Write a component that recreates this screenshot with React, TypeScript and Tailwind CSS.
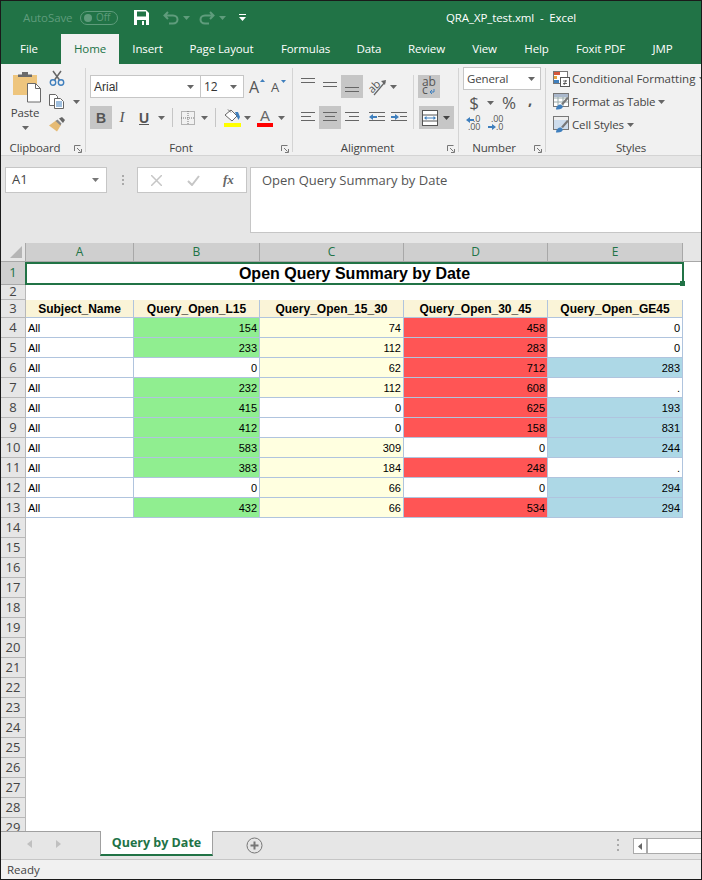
import React from 'react';

const TABS = [
  { name: 'File', w: 56 },
  { name: 'Home', w: 58, active: true },
  { name: 'Insert', w: 57 },
  { name: 'Page Layout', w: 91 },
  { name: 'Formulas', w: 77 },
  { name: 'Data', w: 50 },
  { name: 'Review', w: 65 },
  { name: 'View', w: 51 },
  { name: 'Help', w: 53 },
  { name: 'Foxit PDF', w: 75 },
  { name: 'JMP', w: 49 },
];

const FILL: Record<string, string> = {
  g: 'bg-[#90ee90]',
  y: 'bg-[#ffffe0]',
  r: 'bg-[#ff5555]',
  b: 'bg-[#add8e6]',
  w: 'bg-white',
};

const DATA: [string, string][][] = [
  [['154', 'g'], ['74', 'y'], ['458', 'r'], ['0', 'w']],
  [['233', 'g'], ['112', 'y'], ['283', 'r'], ['0', 'w']],
  [['0', 'w'], ['62', 'y'], ['712', 'r'], ['283', 'b']],
  [['232', 'g'], ['112', 'y'], ['608', 'r'], ['.', 'w']],
  [['415', 'g'], ['0', 'w'], ['625', 'r'], ['193', 'b']],
  [['412', 'g'], ['0', 'w'], ['158', 'r'], ['831', 'b']],
  [['583', 'g'], ['309', 'y'], ['0', 'w'], ['244', 'b']],
  [['383', 'g'], ['184', 'y'], ['248', 'r'], ['.', 'w']],
  [['0', 'w'], ['66', 'y'], ['0', 'w'], ['294', 'b']],
  [['432', 'g'], ['66', 'y'], ['534', 'r'], ['294', 'b']],
];

const HEADERS = ['Subject_Name', 'Query_Open_L15', 'Query_Open_15_30', 'Query_Open_30_45', 'Query_Open_GE45'];
const COLS = ['A', 'B', 'C', 'D', 'E'];
const EMPTY_ROWS = Array.from({ length: 16 }, (_, i) => i + 14);

function Caret({ color = '#666' }: { color?: string }) {
  return (
    <svg className="shrink-0" width="7" height="4" viewBox="0 0 7 4">
      <path d="M0 0h7L3.5 4z" fill={color} />
    </svg>
  );
}

function CaretBox({ w }: { w: string }) {
  return (
    <div className={`flex items-center justify-center ${w}`}>
      <Caret />
    </div>
  );
}

function Launcher() {
  return (
    <svg width="8" height="8" viewBox="0 0 8 8" fill="none" stroke="#777">
      <path d="M.5 6V.5H6.500" />
      <path d="M3 3l3.500 3.500M7.500 4v3.500H4" />
    </svg>
  );
}

function GroupLabel({ text, launcher, pad = 'pr-0' }: { text: string; launcher?: boolean; pad?: string }) {
  return (
    <div className={`relative mt-auto -mb-1 h-4 text-center leading-4 text-[#444] ${pad}`}>
      {text}
      {launcher && (
        <span className="absolute right-[3px] top-[5px]">
          <Launcher />
        </span>
      )}
    </div>
  );
}

function Lines({ offsets, arrow }: { offsets: [number, number][]; arrow?: 'in' | 'out' }) {
  return (
    <svg width="16" height="14" viewBox="0 0 16 14">
      {offsets.map(([x, w], i) => (
        <rect key={i} x={x} y={i * 4 + 1} width={w} height="1" fill="#666" />
      ))}
      {arrow === 'in' && <path d="M0 6l4-3v2h4v2H4v2z" fill="#3f7fbd" />}
      {arrow === 'out' && <path d="M8 6L4 3v2H0v2h4v2z" fill="#3f7fbd" />}
    </svg>
  );
}

function PasteIcon() {
  return (
    <svg className="ml-[6px]" width="32" height="31" viewBox="0 0 32 31">
      <rect x="1" y="3" width="24" height="20" fill="#eec57d" />
      <path d="M6 5V2.500h4V0h6v2.500h4V5z" fill="#6a6a6a" />
      <path d="M15.500 11.500h8l5 5v13.500h-13z" fill="#fff" stroke="#6a6a6a" />
      <path d="M23.500 11.500v5h5" fill="none" stroke="#6a6a6a" />
    </svg>
  );
}

function ScissorsIcon() {
  return (
    <svg width="16" height="16" viewBox="0 0 16 16" fill="none">
      <path d="M4 1l6.500 9M12 1L5.500 10" stroke="#666" strokeWidth="1.500" />
      <circle cx="4" cy="12.500" r="2.700" stroke="#3f7fbd" strokeWidth="1.400" />
      <circle cx="12" cy="12.500" r="2.700" stroke="#3f7fbd" strokeWidth="1.400" />
    </svg>
  );
}

function CopyIcon() {
  return (
    <svg width="16" height="15" viewBox="0 0 16 15" fill="none">
      <path d="M.5.500h6l2 2v9h-8z" fill="#fff" stroke="#666" />
      <path d="M5.500 4.500h6l3 3v7h-9z" fill="#fff" stroke="#666" />
      <path d="M7 8h6M7 10h6M7 12h6" stroke="#3f7fbd" />
    </svg>
  );
}

function BrushIcon() {
  return (
    <svg width="17" height="15" viewBox="0 0 17 15">
      <path d="M10 1.500l3-1.500 3 3-2 3-1-1z" fill="#666" />
      <path d="M0 8.500l7-5 5 4.500-4 6.500z" fill="#e6bb74" />
      <path d="M6.500 4l2-1.500 4 4-1 2z" fill="#888" />
    </svg>
  );
}

function BorderIcon() {
  return (
    <svg width="14" height="14" viewBox="0 0 14 14" fill="none" stroke="#777" strokeDasharray="1 1">
      <rect x=".5" y=".5" width="13" height="13" />
      <path d="M7 0v14M0 7h14" />
    </svg>
  );
}

function FillIcon() {
  return (
    <div className="flex w-[18px] flex-col items-center">
      <svg width="18" height="13" viewBox="0 0 18 13" fill="none">
        <path d="M2 6l6-5 6 6-5 5z" fill="#fff" stroke="#666" />
        <path d="M5 .5l3 3" stroke="#666" />
        <path d="M12 3h3l2 5-1.500 3-1.500-3z" fill="#3f7fbd" />
      </svg>
      <div className="mt-px h-1 w-[17px] bg-[#ffff00]" />
    </div>
  );
}

function FontColorIcon() {
  return (
    <div className="flex w-[18px] flex-col items-center">
      <span className="h-[13px] font-['Liberation_Sans',sans-serif] text-[15px] leading-[14px] text-[#666]">A</span>
      <div className="mt-px h-1 w-4 bg-[#ff0000]" />
    </div>
  );
}

function OrientIcon() {
  return (
    <svg className="overflow-visible" width="18" height="18" viewBox="0 0 18 18" fill="none">
      <text x="0" y="12" transform="rotate(-45 6 10)" fontSize="11" fontFamily="Open Sans, sans-serif" fill="#555">ab</text>
      <path d="M5 17L16 4" stroke="#666" strokeWidth="1.200" />
      <path d="M12 3l5-1-1 5z" fill="#666" />
    </svg>
  );
}

function WrapIcon() {
  return (
    <svg className="overflow-visible" width="16" height="18" viewBox="0 0 16 18" fill="none">
      <text x="1" y="8" fontSize="12" fontFamily="Open Sans, sans-serif" fill="#555">ab</text>
      <text x="1" y="16" fontSize="12" fontFamily="Open Sans, sans-serif" fill="#555">c</text>
      <path d="M13 11v3H9M11 12l-2 2 2 2" stroke="#3f7fbd" />
    </svg>
  );
}

function MergeIcon() {
  return (
    <svg width="16" height="16" viewBox="0 0 16 16" fill="none">
      <rect x=".5" y=".5" width="15" height="15" fill="#fff" stroke="#555" />
      <path d="M0 5h16M0 11h16" stroke="#555" />
      <path d="M3 8h10" stroke="#3f7fbd" />
      <path d="M2 8l2.500-2v4zM14 8l-2.500-2v4z" fill="#3f7fbd" />
    </svg>
  );
}

function CondIcon() {
  return (
    <svg className="shrink-0" width="17" height="16" viewBox="0 0 17 16" fill="none">
      <rect x=".5" y=".5" width="14" height="12" fill="#fff" stroke="#777" />
      <rect x="1" y="1" width="6" height="3" fill="#d5573b" />
      <rect x="1" y="5" width="3" height="3" fill="#e7a33f" />
      <rect x="1" y="9" width="5" height="3" fill="#3f7fbd" />
      <rect x="7.500" y="6.500" width="9" height="9" fill="#fff" stroke="#555" />
      <path d="M10 10h4M10 12.500h4M13 9l-2 5" stroke="#444" strokeWidth=".8" />
    </svg>
  );
}

function TableIcon({ styles }: { styles?: boolean }) {
  return (
    <svg className="shrink-0" width="17" height="17" viewBox="0 0 17 17" fill="none">
      <rect x=".5" y=".5" width="15" height="13" fill={styles ? '#cddcec' : '#fff'} stroke="#777" />
      {!styles && <path d="M5 1v12M10 1v12M1 5h14M1 9h14" stroke="#9aa" />}
      {!styles && <rect x="1" y="1" width="14" height="3" fill="#aab8cc" />}
      {styles && <rect x="1" y="1" width="14" height="3" fill="#eee" />}
      <path d="M16 5l-6 7-2-1 6-7z" fill="#777" />
      <path d="M3 16.500c0-3 2-5 5-5l2 2c-.5 2-3 3.500-7 3z" fill="#3f7fbd" />
    </svg>
  );
}

function DecIcon({ more }: { more?: boolean }) {
  return (
    <svg className="overflow-visible" width="16" height="15" viewBox="0 0 16 15">
      {more ? (
        <>
          <text x="3" y="6" fontSize="9" fontFamily="Open Sans, sans-serif" fill="#555">.00</text>
          <text x="8" y="14" fontSize="9" fontFamily="Open Sans, sans-serif" fill="#555">.0</text>
          <path d="M0 10h4V8l4 3-4 3v-2H0z" fill="#3f7fbd" />
        </>
      ) : (
        <>
          <text x="7" y="6" fontSize="9" fontFamily="Open Sans, sans-serif" fill="#555">.0</text>
          <text x="2" y="14" fontSize="9" fontFamily="Open Sans, sans-serif" fill="#555">.00</text>
          <path d="M8 3H4V1L0 4l4 3V5h4z" fill="#3f7fbd" />
        </>
      )}
    </svg>
  );
}

function TitleBar() {
  return (
    <div className="flex h-[33px] shrink-0 items-center bg-[#217346] pl-[22px] text-[11.5px] tracking-[-0.1px] text-white">
      <span className="w-[57px] text-[#5f9c7c]">AutoSave</span>
      <div className="flex h-[14px] w-[38px] items-center rounded-full border border-[#5f9c7c] pl-[3px] text-[10px] text-[#5f9c7c]">
        <span className="h-2 w-2 rounded-full bg-[#5f9c7c]" />
        <span className="ml-[4px]">Off</span>
      </div>
      <svg className="ml-4" width="15" height="15" viewBox="0 0 15 15">
        <path d="M0 0h12l3 3v12H0z" fill="#fff" />
        <rect x="3" y="1.500" width="9" height="5" fill="#217346" />
        <rect x="3" y="10" width="9" height="5" fill="#217346" />
        <rect x="8" y="11" width="2" height="4" fill="#fff" />
      </svg>
      <svg className="ml-[14px]" width="16" height="14" viewBox="0 0 16 14" fill="none" stroke="#5f9c7c" strokeWidth="2">
        <path d="M5 1L1.500 4.500 5 8M2 4.500h8c6 0 6 8 0 8H6" />
      </svg>
      <span className="ml-[4px]"><Caret color="#5f9c7c" /></span>
      <svg className="ml-[9px]" width="16" height="14" viewBox="0 0 16 14" fill="none" stroke="#5f9c7c" strokeWidth="2">
        <path d="M11 1l3.500 3.500L11 8M14 4.500H6c-6 0-6 8 0 8h4" />
      </svg>
      <span className="ml-[4px]"><Caret color="#5f9c7c" /></span>
      <svg className="ml-[13px]" width="7" height="8" viewBox="0 0 7 8">
        <rect width="7" height="1" fill="#fff" />
        <path d="M0 3h7L3.500 7z" fill="#fff" />
      </svg>
      <span className="ml-[200px] whitespace-pre text-white">QRA_XP_test.xml  -  Excel</span>
    </div>
  );
}

function TabRow() {
  return (
    <div className="flex h-[30px] shrink-0 bg-[#217346] text-[11.5px] tracking-[-0.1px]">
      {TABS.map((t) => (
        <div
          key={t.name}
          className={
            t.active
              ? 'ml-1 flex items-center justify-center bg-[#f1f1f1] text-[#217346]'
              : 'flex items-center justify-center text-white'
          }
          style={{ width: t.w }}
        >
          {t.name}
        </div>
      ))}
    </div>
  );
}

function Ribbon() {
  const btnOn = 'bg-[#c6c6c6]';
  return (
    <div className="flex h-[92px] shrink-0 border-b border-[#d4d4d4] bg-[#f1f1f1] pt-1 text-[11.5px] tracking-[-0.15px] text-[#444]">
      {/* clipboard */}
      <div className="flex h-[84px] w-[85px] shrink-0 flex-col border-r border-[#d4d4d4]">
        <div className="flex">
          <div className="flex w-[48px] flex-col items-center pt-[4px]">
            <PasteIcon />
            <div className="mt-[2px] leading-4">Paste</div>
            <div className="mt-[5px]"><Caret /></div>
          </div>
          <div className="flex flex-col pt-[2px]">
            <ScissorsIcon />
            <div className="mt-2 flex items-center">
              <CopyIcon />
              <span className="ml-2"><Caret /></span>
            </div>
            <div className="mt-2"><BrushIcon /></div>
          </div>
        </div>
        <GroupLabel text="Clipboard" launcher pad="pr-[16px]" />
      </div>

      {/* font */}
      <div className="flex h-[84px] w-[207px] shrink-0 flex-col border-r border-[#d4d4d4] pl-1 pt-[7px]">
        <div className="flex h-[23px] items-center">
          <div className="flex h-[23px] w-[111px] items-center justify-between border border-[#c6c6c6] bg-white pl-[3px] pr-[6px] font-['Liberation_Sans',sans-serif] text-xs tracking-normal text-[#333]">
            Arial<Caret />
          </div>
          <div className="-ml-px flex h-[23px] w-[44px] items-center justify-between border border-[#c6c6c6] bg-white pl-[3px] pr-[6px] text-xs text-[#333]">
            12<Caret />
          </div>
          <div className="relative ml-[5px] w-[16px] text-[16px] leading-none text-[#555]">
            A
            <svg className="absolute right-0 top-0" width="5" height="3" viewBox="0 0 5 3"><path d="M0 3h5L2.500 0z" fill="#3f7fbd" /></svg>
          </div>
          <div className="relative ml-[6px] mt-[2px] w-[15px] text-[13px] leading-none text-[#555]">
            A
            <svg className="absolute right-0 -top-[1px]" width="5" height="3" viewBox="0 0 5 3"><path d="M0 0h5L2.500 3z" fill="#3f7fbd" /></svg>
          </div>
        </div>
        <div className="mt-2 flex h-[23px] items-center text-[#555]">
          <div className={`flex h-[23px] w-[22px] items-center justify-center font-['Liberation_Sans',sans-serif] text-sm font-bold ${btnOn}`}>B</div>
          <div className="flex w-[20px] items-center justify-center font-['Liberation_Serif',serif] text-[15px] italic">I</div>
          <div className="flex w-[24px] items-center justify-center font-['Liberation_Sans',sans-serif] text-sm font-bold underline">U</div>
          <CaretBox w="w-[10px]" />
          <div className="ml-[6px] h-[19px] w-px bg-[#c6c6c6]" />
          <div className="ml-2"><BorderIcon /></div>
          <CaretBox w="w-[18px]" />
          <div className="ml-[2px] h-[19px] w-px bg-[#c6c6c6]" />
          <div className="ml-[7px]"><FillIcon /></div>
          <CaretBox w="w-[12px]" />
          <div className="ml-[3px]"><FontColorIcon /></div>
          <CaretBox w="w-[14px]" />
        </div>
        <GroupLabel text="Font" launcher pad="pr-[20px]" />
      </div>

      {/* alignment */}
      <div className="flex h-[84px] w-[166px] shrink-0 flex-col border-r border-[#d4d4d4] pl-1 pt-[7px]">
        <div className="flex h-[23px]">
          <div className="flex h-[23px] w-[22px] justify-center pt-[2px]"><Lines offsets={[[1, 14], [1, 14]]} /></div>
          <div className="flex h-[23px] w-[22px] justify-center pt-[6px]"><Lines offsets={[[1, 14], [1, 14]]} /></div>
          <div className={`flex h-[23px] w-[22px] justify-center pt-[11px] ${btnOn}`}><Lines offsets={[[1, 14], [1, 14]]} /></div>
          <div className="ml-[6px] flex h-[23px] w-[34px] items-center">
            <OrientIcon />
            <span className="ml-[3px]"><Caret /></span>
          </div>
          <div className="ml-[10px] h-[54px] w-px bg-[#d4d4d4]" />
          <div className={`ml-1 flex h-[23px] w-[22px] items-center justify-center ${btnOn}`}>
            <WrapIcon />
          </div>
        </div>
        <div className="mt-2 flex h-[23px]">
          <div className="flex h-[23px] w-[22px] justify-center pt-[5px]"><Lines offsets={[[1, 14], [1, 10], [1, 14]]} /></div>
          <div className={`flex h-[23px] w-[22px] justify-center pt-[5px] ${btnOn}`}><Lines offsets={[[1, 14], [3, 10], [1, 14]]} /></div>
          <div className="flex h-[23px] w-[22px] justify-center pt-[5px]"><Lines offsets={[[1, 14], [5, 10], [1, 14]]} /></div>
          <div className="ml-[3px] flex h-[23px] w-[22px] justify-center pt-[5px]"><Lines offsets={[[0, 16], [9, 7], [0, 16]]} arrow="in" /></div>
          <div className="flex h-[23px] w-[22px] justify-center pt-[5px]"><Lines offsets={[[0, 16], [9, 7], [0, 16]]} arrow="out" /></div>
          <div className={`ml-[9px] flex h-[23px] w-[35px] items-center pl-[3px] ${btnOn}`}>
            <MergeIcon />
            <span className="ml-[5px]"><Caret color="#444" /></span>
          </div>
        </div>
        <GroupLabel text="Alignment" launcher pad="pr-[20px]" />
      </div>

      {/* number */}
      <div className="flex h-[84px] w-[87px] shrink-0 flex-col border-r border-[#d4d4d4] pl-1">
        <div className="-mt-px flex h-[23px] w-[78px] items-center justify-between border border-[#c6c6c6] bg-white pl-[3px] pr-[5px]">
          General<Caret />
        </div>
        <div className="mt-[2px] flex h-[21px] items-center text-[#555]">
          <span className="w-[22px] text-center text-[17px]">$</span>
          <CaretBox w="w-[10px]" />
          <span className="ml-[2px] w-[24px] text-center text-[17px]">%</span>
          <span className="-mt-[7px] ml-[7px] text-[15px] font-bold leading-none">,</span>
        </div>
        <div className="mt-[3px] flex gap-[6px] pl-[3px]">
          <DecIcon />
          <DecIcon more />
        </div>
        <GroupLabel text="Number" launcher pad="pr-[20px]" />
      </div>

      {/* styles */}
      <div className="flex h-[84px] min-w-0 flex-1 flex-col pl-[7px]">
        <div className="-mt-px flex h-[23px] items-center whitespace-nowrap">
          <CondIcon />
          <span className="ml-[2px] tracking-normal">Conditional Formatting</span>
          <span className="ml-1"><Caret /></span>
        </div>
        <div className="flex h-[23px] items-center whitespace-nowrap">
          <TableIcon />
          <span className="ml-[2px]">Format as Table</span>
          <span className="ml-[3px]"><Caret /></span>
        </div>
        <div className="flex h-[23px] items-center whitespace-nowrap">
          <TableIcon styles />
          <span className="ml-[2px]">Cell Styles</span>
          <span className="ml-[3px]"><Caret /></span>
        </div>
        <GroupLabel text="Styles" pad="pl-[8px]" />
      </div>
    </div>
  );
}

function FormulaBar() {
  return (
    <div className="flex h-[87px] shrink-0 bg-[#e6e6e6] pt-[11px] text-xs">
      <div className="ml-1 flex h-[26px] w-[102px] items-center justify-between border border-[#c6c6c6] bg-white pl-[6px] pr-[7px] text-[13px] text-[#444]">
        A1<Caret color="#777" />
      </div>
      <div className="ml-[14px] flex h-[26px] w-[3px] flex-col items-center justify-center gap-[2px]">
        <span className="h-[2px] w-[2px] bg-[#aaa]" />
        <span className="h-[2px] w-[2px] bg-[#aaa]" />
        <span className="h-[2px] w-[2px] bg-[#aaa]" />
      </div>
      <div className="ml-[13px] flex h-[26px] w-[110px] items-center border border-[#c6c6c6] bg-white">
        <svg className="ml-[13px]" width="11" height="11" viewBox="0 0 11 11" fill="none" stroke="#c6c6c6" strokeWidth="1.500"><path d="M0 0l11 11M11 0L0 11" /></svg>
        <svg className="ml-[25px]" width="13" height="11" viewBox="0 0 13 11" fill="none" stroke="#c6c6c6" strokeWidth="2"><path d="M1 6l4 4 7-9" /></svg>
        <span className="ml-[23px] font-['Liberation_Serif',serif] text-[13px] font-bold italic text-[#666]">fx</span>
      </div>
      <div className="ml-[3px] h-[66px] flex-1 border-y border-l border-[#c6c6c6] bg-white pl-[11px] pt-[2px] text-[13px] leading-5 text-[#555]">
        Open Query Summary by Date
      </div>
    </div>
  );
}

function RowHead({ n, active }: { n: number; active?: boolean }) {
  return (
    <div
      className={
        active
          ? 'flex items-center justify-center border-r border-b border-[#a8a8a8] bg-[#cfcfcf] text-[13px] text-[#217346]'
          : 'flex items-center justify-center border-r border-b border-[#b8b8b8] bg-[#e6e6e6] text-[13px] text-[#444]'
      }
    >
      {n}
    </div>
  );
}

function Sheet() {
  return (
    <div className="relative min-h-0 flex-1 overflow-hidden bg-white">
      <div className="grid grid-cols-[25px_108px_126px_144px_144px_135px_1fr] auto-rows-[20px] grid-rows-[19px_23px_15px_18px]">
        {/* column headers */}
        <div className="flex items-end justify-end border-r border-b border-[#a8a8a8] bg-[#e6e6e6] pb-[3px] pr-[3px]">
          <svg width="12" height="12" viewBox="0 0 12 12"><path d="M12 0v12H0z" fill="#b5b5b5" /></svg>
        </div>
        {COLS.map((c) => (
          <div key={c} className="flex items-center justify-center border-r border-b border-[#a8a8a8] bg-[#cfcfcf] text-xs text-[#217346]">{c}</div>
        ))}
        <div className="border-b border-[#a8a8a8] bg-[#e6e6e6]" />

        {/* merged title */}
        <RowHead n={1} active />
        <div className="relative z-10 col-span-5 -ml-px -mr-px flex items-center justify-center border-2 border-[#217346] bg-white font-['Liberation_Sans',sans-serif] text-base font-bold text-black">
          Open Query Summary by Date
          <span className="absolute -bottom-[3px] -right-[3px] h-[5px] w-[5px] bg-[#217346]" />
        </div>
        <div />

        <RowHead n={2} />
        <div className="col-span-6" />

        <RowHead n={3} />
        {HEADERS.map((h) => (
          <div key={h} className="flex items-center justify-center border-r border-b border-[#b0c4de] bg-[#faf4d8] font-['Liberation_Sans',sans-serif] text-xs font-bold text-black">{h}</div>
        ))}
        <div />

        {DATA.map((row, i) => (
          <React.Fragment key={i}>
            <RowHead n={i + 4} />
            <div className="flex items-center border-r border-b border-[#b0c4de] bg-white pl-[2px] pt-px font-['Liberation_Sans',sans-serif] text-[11px] text-black">All</div>
            {row.map(([v, f], j) => (
              <div key={j} className={`flex items-center justify-end border-r border-b border-[#b0c4de] pr-[2px] pt-px font-['Liberation_Sans',sans-serif] text-[11px] text-black ${FILL[f]}`}>{v}</div>
            ))}
            <div />
          </React.Fragment>
        ))}

        {EMPTY_ROWS.map((n) => (
          <React.Fragment key={n}>
            <RowHead n={n} />
            <div className="col-span-6" />
          </React.Fragment>
        ))}
      </div>
    </div>
  );
}

function SheetTabs() {
  return (
    <div className="flex h-[28px] shrink-0 items-start border-t border-[#a0a0a0] bg-[#e6e6e6]">
      <svg className="ml-[26px] mt-[8px]" width="5" height="8" viewBox="0 0 5 8"><path d="M5 0v8L0 4z" fill="#c0c0c0" /></svg>
      <svg className="ml-[24px] mt-[8px]" width="5" height="8" viewBox="0 0 5 8"><path d="M0 0v8l5-4z" fill="#c0c0c0" /></svg>
      <div className="-mt-px ml-[39px] flex h-[25px] w-[113px] items-center justify-center border-x border-[#a0a0a0] border-b-2 border-b-[#217346] bg-white pt-[2px] text-[12.5px] font-bold text-[#217346]">
        Query by Date
      </div>
      <svg className="ml-[33px] mt-[5px]" width="17" height="17" viewBox="0 0 17 17" fill="none" stroke="#777">
        <circle cx="8.500" cy="8.500" r="7.500" />
        <path d="M8.500 4.500v8M4.500 8.500h8" strokeWidth="2" />
      </svg>
      <div className="ml-[354px] mt-[7px] flex w-[2px] flex-col gap-[3px]">
        <span className="h-[2px] w-[2px] bg-[#aaa]" />
        <span className="h-[2px] w-[2px] bg-[#aaa]" />
        <span className="h-[2px] w-[2px] bg-[#aaa]" />
      </div>
      <div className="ml-[14px] mt-[6px] flex h-[16px] min-w-0 flex-1 border-y border-l border-[#aaa] bg-white">
        <div className="flex w-[14px] items-center justify-center border-r-2 border-[#aaa]">
          <svg width="4" height="7" viewBox="0 0 4 7"><path d="M4 0v7L0 3.500z" fill="#666" /></svg>
        </div>
      </div>
    </div>
  );
}

export default function App() {
  return (
    <div className="flex h-[880px] w-[702px] flex-col overflow-hidden border border-[#1a1a1a] bg-white font-['Open_Sans',sans-serif]">
      <TitleBar />
      <TabRow />
      <Ribbon />
      <FormulaBar />
      <Sheet />
      <SheetTabs />
      <div className="flex h-5 shrink-0 items-center border-t border-[#c6c6c6] bg-[#f1f1f1] pl-[6px] pt-px text-[11.5px] text-[#444]">Ready</div>
    </div>
  );
}
